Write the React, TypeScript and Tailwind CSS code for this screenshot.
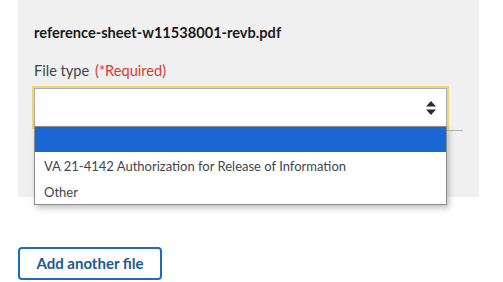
import React from "react";

export default function App() {
  return (
    <div className="w-[503px] h-[282px] bg-white overflow-hidden font-['Lato',sans-serif] text-[#1b1b1b]">
      {/* File card */}
      <div className="ml-[18px] w-[461px] h-[197px] bg-[#f0f0f0] pt-[23px] pl-[16px] pr-[16px]">
        <p className="text-[14.6px] font-bold leading-[20px]">reference-sheet-w11538001-revb.pdf</p>
        <label className="block mt-[18px] text-[14.6px] leading-[20px] text-[#3d4551]">
          File type <span className="text-[#d83933] ml-[2px]">(*Required)</span>
        </label>

        {/* Select with open list */}
        <div className="relative mt-[7px] w-[413px]">
          <div className="h-[39px] bg-white border border-[#a9aeb1] outline-2 outline-[#f2d56b] flex items-center justify-end pr-[10px]">
            <svg width="10" height="14" viewBox="0 0 10 14" className="text-[#2b2b2b]">
              <path d="M5 0 L10 5.5 H0 Z" fill="currentColor" />
              <path d="M5 14 L10 8.5 H0 Z" fill="currentColor" />
            </svg>
          </div>
          <ul className="absolute left-0 top-[38px] w-[413px] bg-white border border-[#8d8d8d] shadow-[2px_3px_6px_rgba(0,0,0,0.25)] text-[13px] text-[#3d4551] z-10">
            <li className="h-[25px] bg-[#1a66d2]"></li>
            <li className="h-[26px] pl-[9px] pt-[3px] flex items-center">VA 21-4142 Authorization for Release of Information</li>
            <li className="h-[26px] pl-[9px] pt-[3px] flex items-center">Other</li>
          </ul>
        </div>
        <div className="mt-[3px] h-px bg-[#b4b4b4]"></div>
      </div>

      {/* Add another */}
      <button className="ml-[18px] mt-[50px] w-[144px] h-[33px] border-2 border-[#1a6dbd] rounded-[4px] text-[15px] font-bold text-[#1a5a96] bg-white">
        Add another file
      </button>
    </div>
  );
}
